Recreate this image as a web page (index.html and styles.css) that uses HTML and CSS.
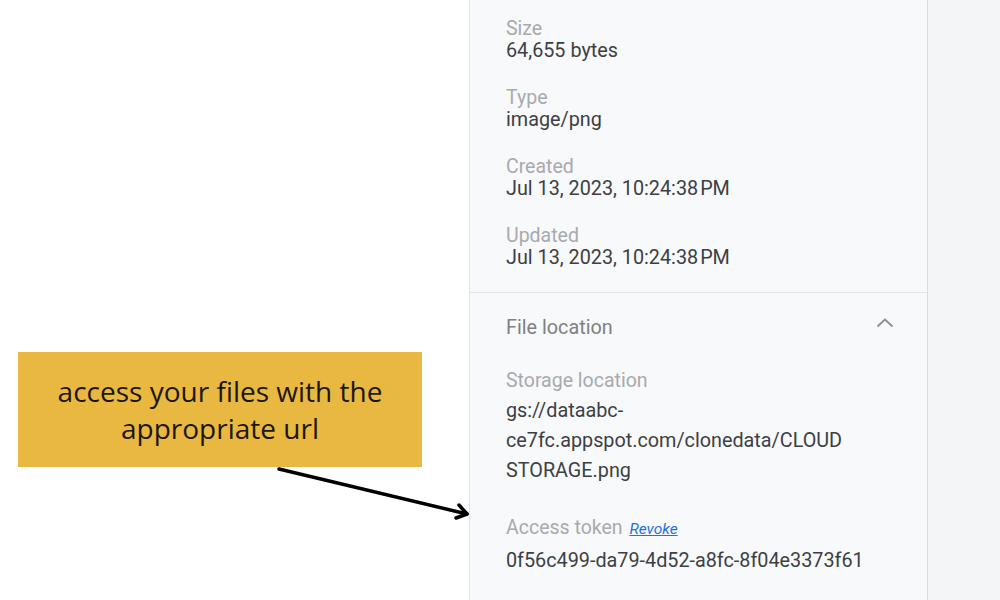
FILE: index.html
```html
<!DOCTYPE html>
<html>
<head>
<meta charset="utf-8">
<link rel="stylesheet" href="styles.css">
</head>
<body>
<div class="page">
  <div class="left">
    <div class="callout">
      <p>access your files with the<br>appropriate url</p>
    </div>
  </div>
  <div class="panel">
    <div class="section meta">
      <div class="field"><div class="label">Size</div><div class="value">64,655 bytes</div></div>
      <div class="field"><div class="label">Type</div><div class="value">image/png</div></div>
      <div class="field"><div class="label">Created</div><div class="value">Jul 13, 2023, 10:24:38&#8202;PM</div></div>
      <div class="field last"><div class="label">Updated</div><div class="value">Jul 13, 2023, 10:24:38&#8202;PM</div></div>
    </div>
    <div class="section location">
      <div class="sec-head">
        <span class="sec-title">File location</span>
        <svg class="chev" width="18" height="10" viewBox="0 0 18 10"><path d="M1.5 8.5 L9 1.5 L16.5 8.5" fill="none" stroke="#8a8d91" stroke-width="1.8"/></svg>
      </div>
      <div class="label loc-label">Storage location</div>
      <div class="value path">gs://dataabc-ce7fc.appspot.com/clonedata/CLOUD STORAGE.png</div>
      <div class="label token-label">Access token <a class="revoke" href="#">Revoke</a></div>
      <div class="value token">0f56c499-da79-4d52-a8fc-8f04e3373f61</div>
    </div>
  </div>
  <div class="rest"></div>
</div>
<svg class="arrow" width="1000" height="600" viewBox="0 0 1000 600">
  <g fill="none" stroke="#000" stroke-width="3.5" stroke-linecap="round" stroke-linejoin="round">
    <path d="M279 469 L467 514"/>
    <path d="M459 505 L467 514 L456 518"/>
  </g>
</svg>
</body>
</html>
```
FILE: styles.css
```css
html, body {
  margin: 0;
  padding: 0;
  background: #ffffff;
}
.page {
  display: flex;
  width: 1000px;
  height: 600px;
  overflow: hidden;
  font-family: Roboto, "Liberation Sans", sans-serif;
}
.left {
  width: 469px;
  flex: none;
  background: #ffffff;
  padding: 352px 0 0 18px;
  box-sizing: border-box;
}
.callout {
  width: 404px;
  height: 115px;
  background: #e9b840;
  display: flex;
  align-items: center;
  justify-content: center;
}
.callout p {
  margin: 0;
  font-family: "Open Sans", "Liberation Sans", sans-serif;
  font-size: 28px;
  line-height: 37px;
  color: #1c160c;
  text-align: center;
}
.panel {
  width: 459px;
  flex: none;
  background: #f8f9fa;
  border-left: 1px solid #e1e3e6;
  border-right: 1px solid #d9dbde;
  box-shadow: 2px 0 2px rgba(0, 0, 0, 0.05);
  box-sizing: border-box;
}
.rest {
  flex: 1;
  background: #f4f5f6;
}
.section {
  padding-left: 36px;
  padding-right: 34px;
}
.meta {
  padding-top: 18px;
  padding-bottom: 23px;
  border-bottom: 1px solid #e3e4e6;
}
.field {
  margin-bottom: 25px;
}
.field.last {
  margin-bottom: 0;
}
.label {
  font-size: 19.5px;
  line-height: 22px;
  color: #a7aaae;
  font-weight: 400;
}
.value {
  font-size: 19.8px;
  line-height: 22px;
  color: #3c4043;
}
.location {
  padding-top: 24px;
}
.sec-head {
  display: flex;
  justify-content: space-between;
  align-items: center;
  height: 22px;
}
.sec-title {
  font-size: 19.8px;
  line-height: 22px;
  color: #7d8185;
}
.chev {
  margin-top: -10px;
  margin-right: -1px;
}
.loc-label {
  margin-top: 31px;
}
.path {
  margin-top: 4px;
  line-height: 30px;
  width: 370px;
}
.token-label {
  margin-top: 31px;
}
.revoke {
  font-size: 15.5px;
  font-style: italic;
  color: #1a73e8;
  text-decoration: underline;
  margin-left: 2px;
  font-weight: 400;
}
.token {
  margin-top: 6px;
  line-height: 30px;
  white-space: nowrap;
}
.arrow {
  position: absolute;
  left: 0;
  top: 0;
  pointer-events: none;
}
```
